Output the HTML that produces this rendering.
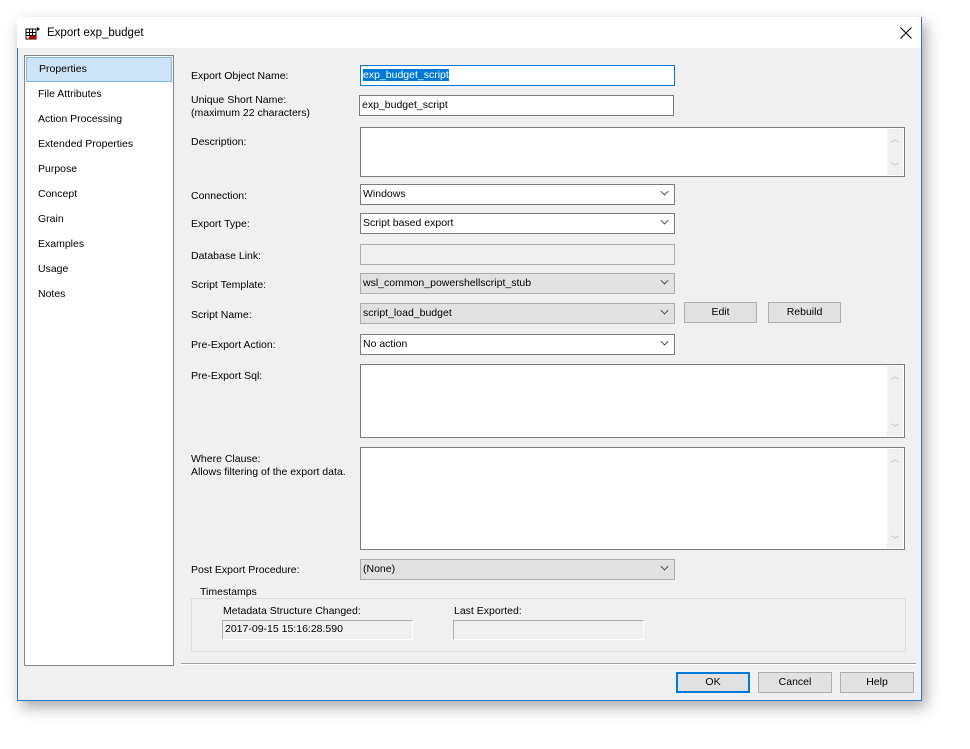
<!DOCTYPE html>
<html><head><style>
*{box-sizing:border-box;margin:0;padding:0}
body{width:970px;height:749px;background:#fff;font-family:"Liberation Sans",sans-serif;font-size:10.5px;color:#000;position:relative;overflow:hidden}
.a{position:absolute}
#win{left:17px;top:17px;width:905px;height:684px;border:1px solid #2b79c9;background:#f0f0f0;box-shadow:4px 6px 14px rgba(0,0,0,.35)}
#in{position:absolute;left:-1px;top:-1px;width:905px;height:684px}
#title{left:0;top:0;width:904px;height:31px;background:#fff}
.lbl{position:absolute;white-space:nowrap}
.box{position:absolute;border:1px solid #7a7a7a;background:#fff;height:21px;padding:3px 2px;white-space:nowrap}
.dis{background:#f0f0f0;border-color:#adadad}
.cb{background:#e1e1e1;border-color:#adadad}
.arr{position:absolute;right:6px;width:7px;height:7px;border-right:1px solid #333;border-bottom:1px solid #333;transform:rotate(45deg) scale(.8);top:3px}
.btn{position:absolute;border:1px solid #adadad;background:#e1e1e1;height:21px;text-align:center;line-height:19px}
.sb{position:absolute;right:1px;top:1px;bottom:1px;width:16px;background:#f0f0f0;color:#bbb;font-size:9px;text-align:center}
.nav div{height:25px;line-height:25px;padding-left:13px}
</style></head><body>
<div id="win" class="a"><div id="in">
 <div id="title" class="a">
  <svg class="a" style="left:8px;top:9px" width="16" height="14" viewBox="0 0 16 14"><rect x="1" y="3" width="10" height="10" fill="none" stroke="#000"/><path d="M1 6.5h10M1 9.5h10M4.5 3v10M7.5 3v10" stroke="#000"/><rect x="4" y="10" width="7" height="3" fill="#c00"/><path d="M12 1l3 2-3 2z" fill="#000"/></svg>
  <div class="lbl" style="left:30px;top:10px;font-size:11.5px">Export exp_budget</div>
  <svg class="a" style="left:883px;top:10px" width="12" height="12" viewBox="0 0 12 12"><path d="M0.5 0.5L11.5 11.5M11.5 0.5L0.5 11.5" stroke="#000" stroke-width="1.1"/></svg>
 </div>
 <div class="a nav" style="left:7px;top:38px;width:150px;height:611px;border:1px solid #828790;background:#fff;padding-top:1px">
  <div style="background:#cce4f7;border:1px solid #7eb4ea;height:25px;line-height:23px;padding-left:12px;margin:0 1px">Properties</div>
  <div>File Attributes</div><div>Action Processing</div><div>Extended Properties</div><div>Purpose</div><div>Concept</div><div>Grain</div><div>Examples</div><div>Usage</div><div>Notes</div>
 </div>
 <div class="lbl" style="left:174px;top:53px">Export Object Name:</div>
 <div class="box" style="left:343px;top:48px;width:315px;border-color:#0078d7"><span style="background:#0078d7;color:#fff">exp_budget_script</span></div>
 <div class="lbl" style="left:174px;top:77px;line-height:13px">Unique Short Name:<br>(maximum 22 characters)</div>
 <div class="box" style="left:342px;top:78px;width:315px">exp_budget_script</div>
 <div class="lbl" style="left:174px;top:119px">Description:</div>
 <div class="box" style="left:343px;top:110px;width:545px;height:50px"><div class="sb" style="padding-top:3px">︿<div style="position:absolute;bottom:2px;width:16px">﹀</div></div></div>
 <div class="lbl" style="left:174px;top:173px">Connection:</div>
 <div class="box" style="left:343px;top:167px;width:315px">Windows<div class="arr"></div></div>
 <div class="lbl" style="left:174px;top:201px">Export Type:</div>
 <div class="box" style="left:343px;top:196px;width:315px">Script based export<div class="arr"></div></div>
 <div class="lbl" style="left:174px;top:233px">Database Link:</div>
 <div class="box dis" style="left:343px;top:227px;width:315px"></div>
 <div class="lbl" style="left:174px;top:262px">Script Template:</div>
 <div class="box cb" style="left:343px;top:256px;width:315px">wsl_common_powershellscript_stub<div class="arr"></div></div>
 <div class="lbl" style="left:174px;top:292px">Script Name:</div>
 <div class="box cb" style="left:343px;top:286px;width:315px">script_load_budget<div class="arr"></div></div>
 <div class="btn" style="left:667px;top:285px;width:73px">Edit</div>
 <div class="btn" style="left:751px;top:285px;width:73px">Rebuild</div>
 <div class="lbl" style="left:174px;top:322px">Pre-Export Action:</div>
 <div class="box" style="left:343px;top:317px;width:315px">No action<div class="arr"></div></div>
 <div class="lbl" style="left:174px;top:353px">Pre-Export Sql:</div>
 <div class="box" style="left:343px;top:347px;width:545px;height:74px"><div class="sb" style="padding-top:3px">︿<div style="position:absolute;bottom:2px;width:16px">﹀</div></div></div>
 <div class="lbl" style="left:174px;top:436px;line-height:13px">Where Clause:<br>Allows filtering of the export data.</div>
 <div class="box" style="left:343px;top:430px;width:545px;height:103px"><div class="sb" style="padding-top:3px">︿<div style="position:absolute;bottom:2px;width:16px">﹀</div></div></div>
 <div class="lbl" style="left:174px;top:547px">Post Export Procedure:</div>
 <div class="box cb" style="left:343px;top:542px;width:315px">(None)<div class="arr"></div></div>
 <div class="a" style="left:174px;top:581px;width:715px;height:54px;border:1px solid #dcdcdc"></div>
 <div class="lbl" style="left:181px;top:569px;background:#f0f0f0;padding:0 2px">Timestamps</div>
 <div class="lbl" style="left:206px;top:588px">Metadata Structure Changed:</div>
 <div class="box dis" style="left:205px;top:603px;width:191px;height:20px;border-color:#adadad #fff #fff #adadad;padding:2px">2017-09-15 15:16:28.590</div>
 <div class="lbl" style="left:437px;top:588px">Last Exported:</div>
 <div class="box dis" style="left:436px;top:603px;width:191px;height:20px;border-color:#adadad #fff #fff #adadad"></div>
 <div class="a" style="left:164px;top:646px;width:735px;height:2px;border-top:1px solid #a0a0a0;border-bottom:1px solid #fff"></div>
 <div class="btn" style="left:659px;top:655px;width:74px;border:2px solid #0078d7;line-height:17px">OK</div>
 <div class="btn" style="left:741px;top:655px;width:74px">Cancel</div>
 <div class="btn" style="left:823px;top:655px;width:74px">Help</div>
</div></div>
</body></html>
